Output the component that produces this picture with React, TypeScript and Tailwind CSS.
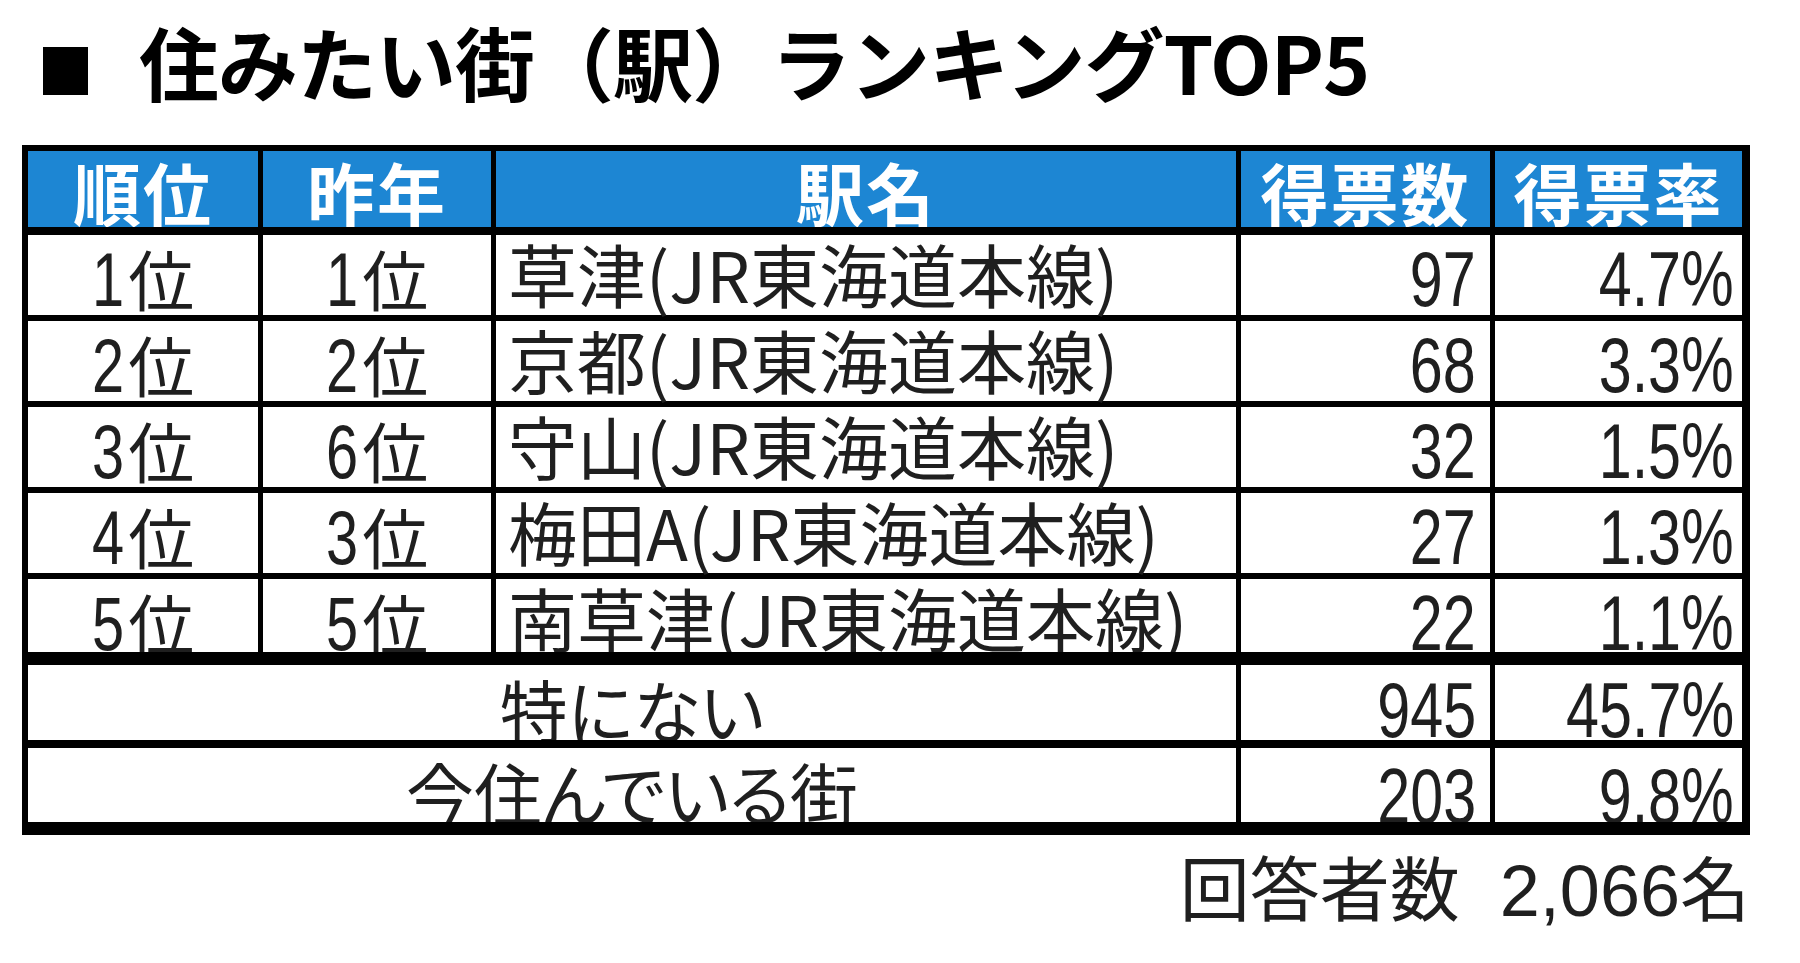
import React from "react";

const JP = "[font-family:'Noto_Sans_CJK_JP','Noto_Sans',sans-serif]";
const LAT = "[font-family:'Liberation_Sans','Noto_Sans_CJK_JP',sans-serif]";
const COLS = "grid grid-cols-[230px_228px_740px_249px_247px] grid-rows-[100%] gap-x-[5px]";

type Row = { rank: string; prev: string; name: string; votes: string; rate: string; h: string; mb: string; clip: string };

const rows: Row[] = [
  { rank: "1", prev: "1", name: "草津(JR東海道本線)", votes: "97", rate: "4.7%", h: "h-[80px]", mb: "mb-[6px]", clip: "" },
  { rank: "2", prev: "2", name: "京都(JR東海道本線)", votes: "68", rate: "3.3%", h: "h-[80px]", mb: "mb-[6px]", clip: "" },
  { rank: "3", prev: "6", name: "守山(JR東海道本線)", votes: "32", rate: "1.5%", h: "h-[80px]", mb: "mb-[6px]", clip: "" },
  { rank: "4", prev: "3", name: "梅田A(JR東海道本線)", votes: "27", rate: "1.3%", h: "h-[80px]", mb: "mb-[6px]", clip: "" },
  { rank: "5", prev: "5", name: "南草津(JR東海道本線)", votes: "22", rate: "1.1%", h: "h-[73px]", mb: "mb-[13px]", clip: "overflow-hidden" },
];

function Num({ children }: { children: React.ReactNode }) {
  return (
    <span className={`${LAT} inline-block origin-right scale-x-[0.76] text-[78px] leading-none`}>{children}</span>
  );
}

function Rank({ n }: { n: string }) {
  return (
    <span className="flex items-baseline leading-none">
      <span className={`${LAT} inline-block origin-center scale-x-[0.76] text-[76px] leading-none -mx-[5px]`}>{n}</span>
      <span className={`${JP} ml-[4px] text-[66px] leading-none`}>位</span>
    </span>
  );
}

export default function App() {
  return (
    <div className="w-[1800px] h-[963px] bg-white text-[#1f1f1f] overflow-hidden">
      {/* Title */}
      <div className="flex items-start pt-[20px] pl-[43px]">
        <div className="w-[45px] h-[48px] bg-black mt-[27px] shrink-0" />
        <div className={`${JP} ml-[51px] text-[80px] font-bold leading-none tracking-[-1px] text-black whitespace-nowrap`}>
          住みたい街（駅）ランキングTOP5
        </div>
      </div>

      {/* Table */}
      <div className="ml-[22px] mt-[45px] w-[1728px]">
        <div className="bg-black pt-[6px] pl-[6px] pr-[8px] pb-[13px]">
          {/* header */}
          <div className={`${COLS} h-[76px] mb-[8px]`}>
            {["順位", "昨年", "駅名", "得票数", "得票率"].map((t) => (
              <div
                key={t}
                className={`${JP} bg-[#1d86d3] text-white font-bold text-[68px] leading-none tracking-[2px] flex items-center justify-center pt-[6px] overflow-hidden`}
              >
                {t}
              </div>
            ))}
          </div>

          {rows.map((r) => (
            <div key={r.rank} className={`${COLS} ${r.h} ${r.mb}`}>
              <div className={`bg-white flex items-start justify-center pt-[7px] ${r.clip}`}>
                <Rank n={r.rank} />
              </div>
              <div className={`bg-white flex items-start justify-center pt-[7px] ${r.clip}`}>
                <Rank n={r.prev} />
              </div>
              <div className={`${JP} bg-white flex items-start pl-[12px] pt-[4px] text-[69px] leading-none whitespace-nowrap ${r.clip}`}>
                {r.name}
              </div>
              <div className={`bg-white flex items-start justify-end pr-[14px] pt-[5px] ${r.clip}`}>
                <Num>{r.votes}</Num>
              </div>
              <div className={`bg-white flex items-start justify-end pr-[8px] pt-[5px] ${r.clip}`}>
                <Num>{r.rate}</Num>
              </div>
            </div>
          ))}

          {/* 特にない */}
          <div className={`${COLS} h-[75px] mb-[8px]`}>
            <div className={`${JP} col-span-3 bg-white flex items-start justify-center pt-[10px] text-[68px] leading-none [font-feature-settings:'palt'] overflow-hidden`}>
              特にない
            </div>
            <div className="bg-white flex items-start justify-end pr-[14px] pt-[6px] overflow-hidden">
              <Num>945</Num>
            </div>
            <div className="bg-white flex items-start justify-end pr-[8px] pt-[6px] overflow-hidden">
              <Num>45.7%</Num>
            </div>
          </div>

          {/* 今住んでいる街 */}
          <div className={`${COLS} h-[74px]`}>
            <div className={`${JP} col-span-3 bg-white flex items-start justify-center pt-[10px] text-[68px] leading-none [font-feature-settings:'palt'] overflow-hidden`}>
              今住んでいる街
            </div>
            <div className="bg-white flex items-start justify-end pr-[14px] pt-[9px] overflow-hidden">
              <Num>203</Num>
            </div>
            <div className="bg-white flex items-start justify-end pr-[8px] pt-[9px] overflow-hidden">
              <Num>9.8%</Num>
            </div>
          </div>
        </div>

        {/* footer */}
        <div className={`${JP} mt-[16px] flex justify-end items-baseline leading-none text-[#1f1f1f]`}>
          <span className="text-[70px] leading-none">回答者数</span>
          <span className={`${LAT} ml-[40px] text-[72px] leading-none`}>2,066</span>
          <span className="text-[70px] leading-none">名</span>
        </div>
      </div>
    </div>
  );
}
